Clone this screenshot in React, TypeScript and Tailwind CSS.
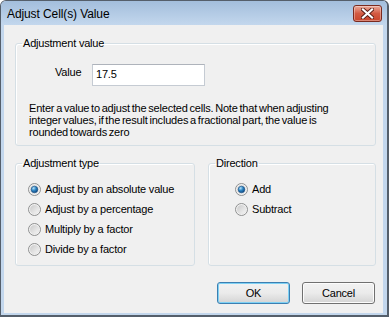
import React from "react";

function Radio({ checked }: { checked?: boolean }) {
  const id = checked ? "rc" : "ru";
  return (
    <svg width="13" height="13" viewBox="0 0 13 13" className="shrink-0">
      <defs>
        <linearGradient id={id + "o"} x1="0" y1="0" x2="1" y2="1">
          <stop offset="0" stopColor="#c9c9c9" />
          <stop offset="1" stopColor="#f6f6f6" />
        </linearGradient>
        <radialGradient id={id + "d"} cx="0.35" cy="0.3" r="0.8">
          <stop offset="0" stopColor="#b7e3fa" />
          <stop offset="0.45" stopColor="#2f86c4" />
          <stop offset="1" stopColor="#0b3d73" />
        </radialGradient>
      </defs>
      <circle cx="6.5" cy="6.5" r="6" fill="#f4f4f4" stroke="#8e8f8f" strokeWidth="1" />
      <circle cx="6.5" cy="6.5" r="4.5" fill={`url(#${id}o)`} stroke="#dedede" strokeWidth="0.5" />
      {checked && <circle cx="6.5" cy="6.5" r="3.3" fill={`url(#${id}d)`} stroke="#164f86" strokeWidth="0.6" />}
    </svg>
  );
}

function RadioRow({ label, checked }: { label: string; checked?: boolean }) {
  return (
    <div className="h-[20px] flex items-center gap-[4px]">
      <Radio checked={checked} />
      <span className="leading-[13px]">{label}</span>
    </div>
  );
}

export default function App() {
  return (
    <div className="w-[389px] h-[317px] flex flex-col bg-[#c3d7ed] border-l border-t border-r-2 border-b-2 border-[#555f6b] rounded-t-[6px] overflow-hidden font-['Liberation_Sans',Arial,sans-serif] text-[11px] tracking-[-0.2px] text-black">
      <div className="h-[24px] shrink-0 flex items-center pl-[6px] pr-[5px] bg-gradient-to-b from-[#a3bedc] to-[#c3d7ed]">
        <span className="text-[12px] leading-[14px] pt-[1px] tracking-[-0.1px]">Adjust Cell(s) Value</span>
        <div className="ml-auto w-[29px] h-[17px] rounded-[3px] border border-[#7a2a1f] bg-gradient-to-b from-[#e9a99a] via-[#d35a42] to-[#c9452b] flex items-center justify-center shadow-[inset_0_0_0_1px_rgba(255,255,255,0.35)]">
          <svg width="13" height="11" viewBox="0 0 13 11">
            <path d="M2 1.5 L11 9.5 M11 1.5 L2 9.5" stroke="#5a1e16" strokeWidth="4" strokeLinecap="square" />
            <path d="M2 1.5 L11 9.5 M11 1.5 L2 9.5" stroke="#ffffff" strokeWidth="2.2" strokeLinecap="square" />
          </svg>
        </div>
      </div>
      <div className="ml-[3px] mr-[4px] mb-[2px] h-[288px] bg-[#f0f0f0] flex flex-col pl-[11px] pr-[7px] pt-[12px]">
        <fieldset className="h-[109px] border border-[#d5dfe5] rounded-[3px] p-0 m-0 shadow-[inset_1px_1px_0_#ffffff]">
          <legend className="ml-[6px] px-[1px] leading-[13px]">Adjustment value</legend>
          <div className="mt-[14px] pl-[39px] flex items-start">
            <span className="w-[37px] leading-[13px] pt-[2px]">Value</span>
            <div className="w-[113px] h-[22px] bg-white border border-[#c5cbd3] border-t-[#aeb3bb] pl-[3px] pt-[3px] leading-[13px]">17.5</div>
          </div>
          <p className="mt-[16px] pl-[13px] leading-[12px] [word-spacing:-1px]">
            Enter a value to adjust the selected cells. Note that when adjusting
            <br />
            integer values, if the result includes a fractional part, the value is
            <br />
            rounded towards zero
          </p>
        </fieldset>
        <div className="mt-[11px] flex gap-[13px]">
          <fieldset className="w-[180px] h-[109px] border border-[#d5dfe5] rounded-[3px] p-0 m-0 shadow-[inset_1px_1px_0_#ffffff]">
            <legend className="ml-[6px] px-[1px] leading-[13px]">Adjustment type</legend>
            <div className="mt-[9px] pl-[12px] flex flex-col">
              <RadioRow label="Adjust by an absolute value" checked />
              <RadioRow label="Adjust by a percentage" />
              <RadioRow label="Multiply by a factor" />
              <RadioRow label="Divide by a factor" />
            </div>
          </fieldset>
          <fieldset className="w-[168px] h-[109px] border border-[#d5dfe5] rounded-[3px] p-0 m-0 shadow-[inset_1px_1px_0_#ffffff]">
            <legend className="ml-[6px] px-[1px] leading-[13px]">Direction</legend>
            <div className="mt-[9px] pl-[26px] flex flex-col">
              <RadioRow label="Add" checked />
              <RadioRow label="Subtract" />
            </div>
          </fieldset>
        </div>
        <div className="mt-[16px] flex justify-end gap-[12px] pr-[1px]">
          <div className="w-[73px] h-[22px] rounded-[3px] border border-[#3c7fb1] bg-gradient-to-b from-[#f2f2f2] via-[#ebebeb] to-[#d4d4d4] shadow-[inset_0_0_0_1px_#7fd1f4] flex items-center justify-center leading-[13px]">OK</div>
          <div className="w-[73px] h-[22px] rounded-[3px] border border-[#707070] bg-gradient-to-b from-[#f2f2f2] via-[#ebebeb] to-[#d4d4d4] shadow-[inset_0_0_0_1px_#fcfcfc] flex items-center justify-center leading-[13px]">Cancel</div>
        </div>
      </div>
    </div>
  );
}
